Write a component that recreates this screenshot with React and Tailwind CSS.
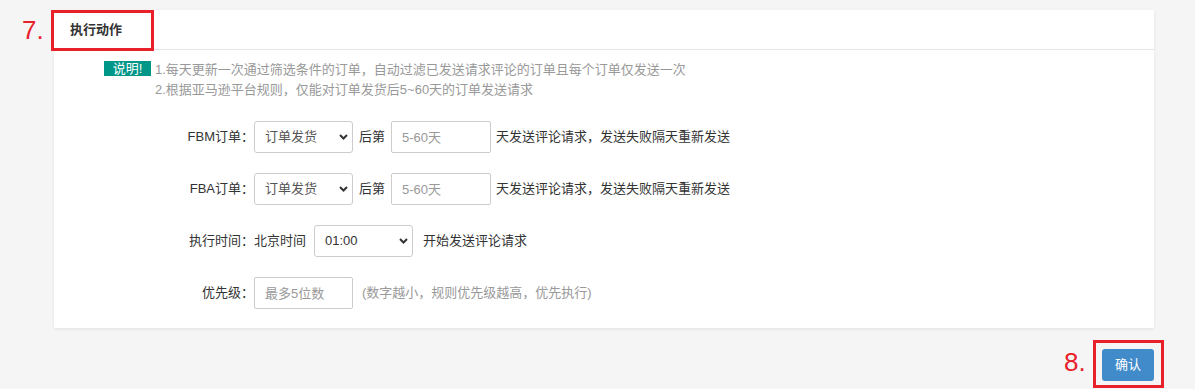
import { useState } from "react";

const FONT = { fontFamily: '"Liberation Sans", "Noto Sans CJK SC", sans-serif' };

function Chevron() {
  return (
    <svg
      className="pointer-events-none absolute right-[5px] top-1/2 -translate-y-1/2"
      width="9"
      height="6"
      viewBox="0 0 9 6"
    >
      <path d="M1 1l3.5 3.5L8 1" fill="none" stroke="#333" strokeWidth="2" />
    </svg>
  );
}

function SelectBox({ value, options, onChange, width, color }) {
  return (
    <div className={`relative h-8 ${width}`}>
      <select
        value={value}
        onChange={(e) => onChange(e.target.value)}
        className={`h-full w-full appearance-none rounded-[3px] border border-[#cccccc] bg-white pl-[10px] pr-5 text-[13px] outline-none ${color}`}
        style={FONT}
      >
        {options.map((o) => (
          <option key={o} value={o}>
            {o}
          </option>
        ))}
      </select>
      <Chevron />
    </div>
  );
}

function TextBox({ placeholder, width = "w-[100px]" }) {
  return (
    <input
      type="text"
      placeholder={placeholder}
      className={`h-8 ${width} rounded-[2px] border border-[#cccccc] bg-white px-[10px] text-[13px] text-[#333] outline-none placeholder:text-[#999]`}
      style={FONT}
    />
  );
}

function Row({ label, children }) {
  return (
    <div className="flex h-8 items-center">
      <div className="w-[200px] text-right text-[13px] text-[#333]">{label}</div>
      {children}
    </div>
  );
}

export default function App() {
  const [fbmAction, setFbmAction] = useState("订单发货");
  const [fbaAction, setFbaAction] = useState("订单发货");
  const [execTime, setExecTime] = useState("01:00");

  const actions = ["订单发货", "订单签收"];
  const times = Array.from({ length: 24 }, (_, i) => `${String(i).padStart(2, "0")}:00`);

  return (
    <div className="min-h-[389px] w-[1195px] bg-[#f5f5f5] pl-[54px] pt-[10px]" style={FONT}>
      <div className="relative w-[1100px] bg-white shadow-[0_1px_3px_rgba(0,0,0,0.08)]">
        {/* annotation 7 */}
        <div className="absolute -left-[32px] top-[5px] text-[26px] leading-[30px] text-[#e8202a]">7.</div>
        <div className="absolute -left-[3px] top-0 h-[41px] w-[103px] border-[3px] border-[#e8202a]" />

        <div className="flex h-10 items-center border-b border-[#e5e5e5] pl-4">
          <h2 className="text-[13px] font-bold text-[#333]">执行动作</h2>
        </div>

        <div className="pb-[19px] pt-[10px]">
          <div className="flex items-start pl-[50px] text-[13px] leading-5 text-[#999]">
            <span className="mr-[4px] mt-[1px] flex h-[15px] w-[47px] items-center justify-center bg-[#009688] text-[13px] leading-none text-white">
              说明!
            </span>
            <div>
              <p>1.每天更新一次通过筛选条件的订单，自动过滤已发送请求评论的订单且每个订单仅发送一次</p>
              <p>2.根据亚马逊平台规则，仅能对订单发货后5~60天的订单发送请求</p>
            </div>
          </div>

          <div className="mt-[21px] flex flex-col gap-5">
            <Row label="FBM订单：">
              <SelectBox value={fbmAction} options={actions} onChange={setFbmAction} width="w-[99px]" color="text-[#555]" />
              <span className="ml-[6px] mr-[6px] text-[13px] text-[#333]">后第</span>
              <TextBox placeholder="5-60天" />
              <span className="ml-[5px] text-[13px] text-[#333]">天发送评论请求，发送失败隔天重新发送</span>
            </Row>

            <Row label="FBA订单：">
              <SelectBox value={fbaAction} options={actions} onChange={setFbaAction} width="w-[99px]" color="text-[#555]" />
              <span className="ml-[6px] mr-[6px] text-[13px] text-[#333]">后第</span>
              <TextBox placeholder="5-60天" />
              <span className="ml-[5px] text-[13px] text-[#333]">天发送评论请求，发送失败隔天重新发送</span>
            </Row>

            <Row label="执行时间：">
              <span className="mr-2 text-[13px] text-[#333]">北京时间</span>
              <SelectBox value={execTime} options={times} onChange={setExecTime} width="w-[99px]" color="text-[#333]" />
              <span className="ml-[10px] text-[13px] text-[#333]">开始发送评论请求</span>
            </Row>

            <Row label="优先级：">
              <TextBox placeholder="最多5位数" width="w-[99px]" />
              <span className="ml-[9px] text-[13px] text-[#999]">(数字越小，规则优先级越高，优先执行)</span>
            </Row>
          </div>
        </div>
      </div>

      <div className="mt-[21px] flex w-[1100px] justify-end">
        <div className="relative">
          {/* annotation 8 */}
          <div className="absolute -left-[38px] top-[-2px] text-[26px] leading-[30px] text-[#e8202a]">8.</div>
          <div className="absolute -left-[9px] -top-[9px] h-[48px] w-[71px] border-[3px] border-[#e8202a]" />
          <button
            type="button"
            className="relative h-8 w-[52px] rounded-[3px] bg-[#428bca] text-[13px] text-white"
          >
            确认
          </button>
        </div>
      </div>
    </div>
  );
}
